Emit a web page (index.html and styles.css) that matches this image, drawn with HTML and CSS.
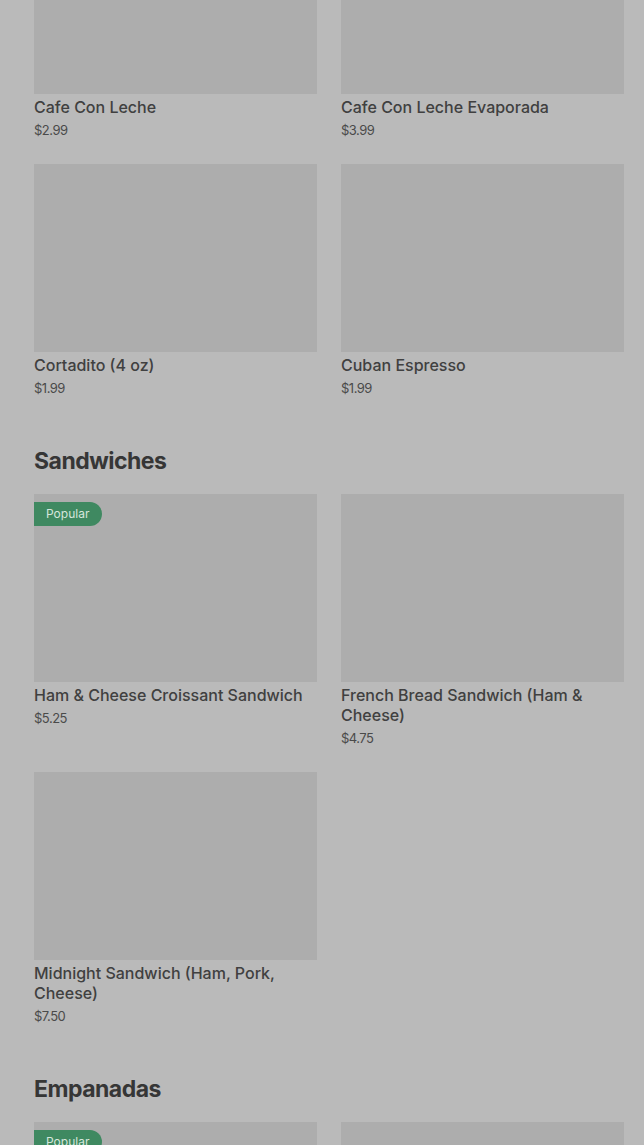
FILE: index.html
```html
<!DOCTYPE html>
<html lang="en">
<head>
<meta charset="utf-8">
<title>Menu</title>
<link rel="stylesheet" href="styles.css">
</head>
<body>
<main class="menu">
  <section class="section first">
    <div class="grid">
      <article class="card">
        <div class="thumb"></div>
        <h3 class="title">Cafe Con Leche</h3>
        <p class="price">$2.99</p>
      </article>
      <article class="card">
        <div class="thumb"></div>
        <h3 class="title">Cafe Con Leche Evaporada</h3>
        <p class="price">$3.99</p>
      </article>
      <article class="card">
        <div class="thumb"></div>
        <h3 class="title">Cortadito (4 oz)</h3>
        <p class="price">$1.99</p>
      </article>
      <article class="card">
        <div class="thumb"></div>
        <h3 class="title">Cuban Espresso</h3>
        <p class="price">$1.99</p>
      </article>
    </div>
  </section>

  <section class="section">
    <h2 class="heading">Sandwiches</h2>
    <div class="grid">
      <article class="card">
        <div class="thumb"><span class="badge">Popular</span></div>
        <h3 class="title">Ham &amp; Cheese Croissant Sandwich</h3>
        <p class="price">$5.25</p>
      </article>
      <article class="card">
        <div class="thumb"></div>
        <h3 class="title">French Bread Sandwich (Ham &amp; Cheese)</h3>
        <p class="price">$4.75</p>
      </article>
      <article class="card">
        <div class="thumb"></div>
        <h3 class="title">Midnight Sandwich (Ham, Pork, Cheese)</h3>
        <p class="price">$7.50</p>
      </article>
    </div>
  </section>

  <section class="section">
    <h2 class="heading">Empanadas</h2>
    <div class="grid">
      <article class="card">
        <div class="thumb"><span class="badge">Popular</span></div>
        <h3 class="title">Beef Empanada</h3>
        <p class="price">$2.50</p>
      </article>
      <article class="card">
        <div class="thumb"></div>
        <h3 class="title">Chicken Empanada</h3>
        <p class="price">$2.50</p>
      </article>
    </div>
  </section>
</main>
</body>
</html>
```

FILE: styles.css
```css
html, body {
  margin: 0;
  padding: 0;
  background: #bababa;
  overflow: hidden;
}

body {
  font-family: Inter, "Noto Sans", "Liberation Sans", sans-serif;
  color: #3e3e3e;
}

.menu {
  padding: 0 20px 0 34px;
  margin-top: -94px;
}

.section {
  padding-top: 47px;
}

.section.first {
  padding-top: 0;
}

.heading {
  margin: 0 0 17px;
  font-size: 23px;
  line-height: 32px;
  font-weight: 700;
  letter-spacing: -0.5px;
  color: #363636;
}

.grid {
  display: grid;
  grid-template-columns: 283px 283px;
  column-gap: 24px;
  row-gap: 24px;
  align-items: start;
}

.card {
  display: flex;
  flex-direction: column;
}

.thumb {
  position: relative;
  height: 188px;
  background: #adadad;
}

.badge {
  position: absolute;
  top: 8px;
  left: 0;
  height: 24px;
  padding: 0 13px 0 12px;
  border-radius: 0 12px 12px 0;
  background: #3f8961;
  color: #d6e6dc;
  font-size: 12px;
  line-height: 24px;
  font-weight: 400;
}

.title {
  margin: 3px 0 0;
  font-size: 16px;
  line-height: 20px;
  font-weight: 500;
  color: #404040;
}

.price {
  margin: 3px 0 0;
  font-size: 13px;
  line-height: 20px;
  font-weight: 400;
  color: #4a4a4a;
  letter-spacing: -0.5px;
}
```
